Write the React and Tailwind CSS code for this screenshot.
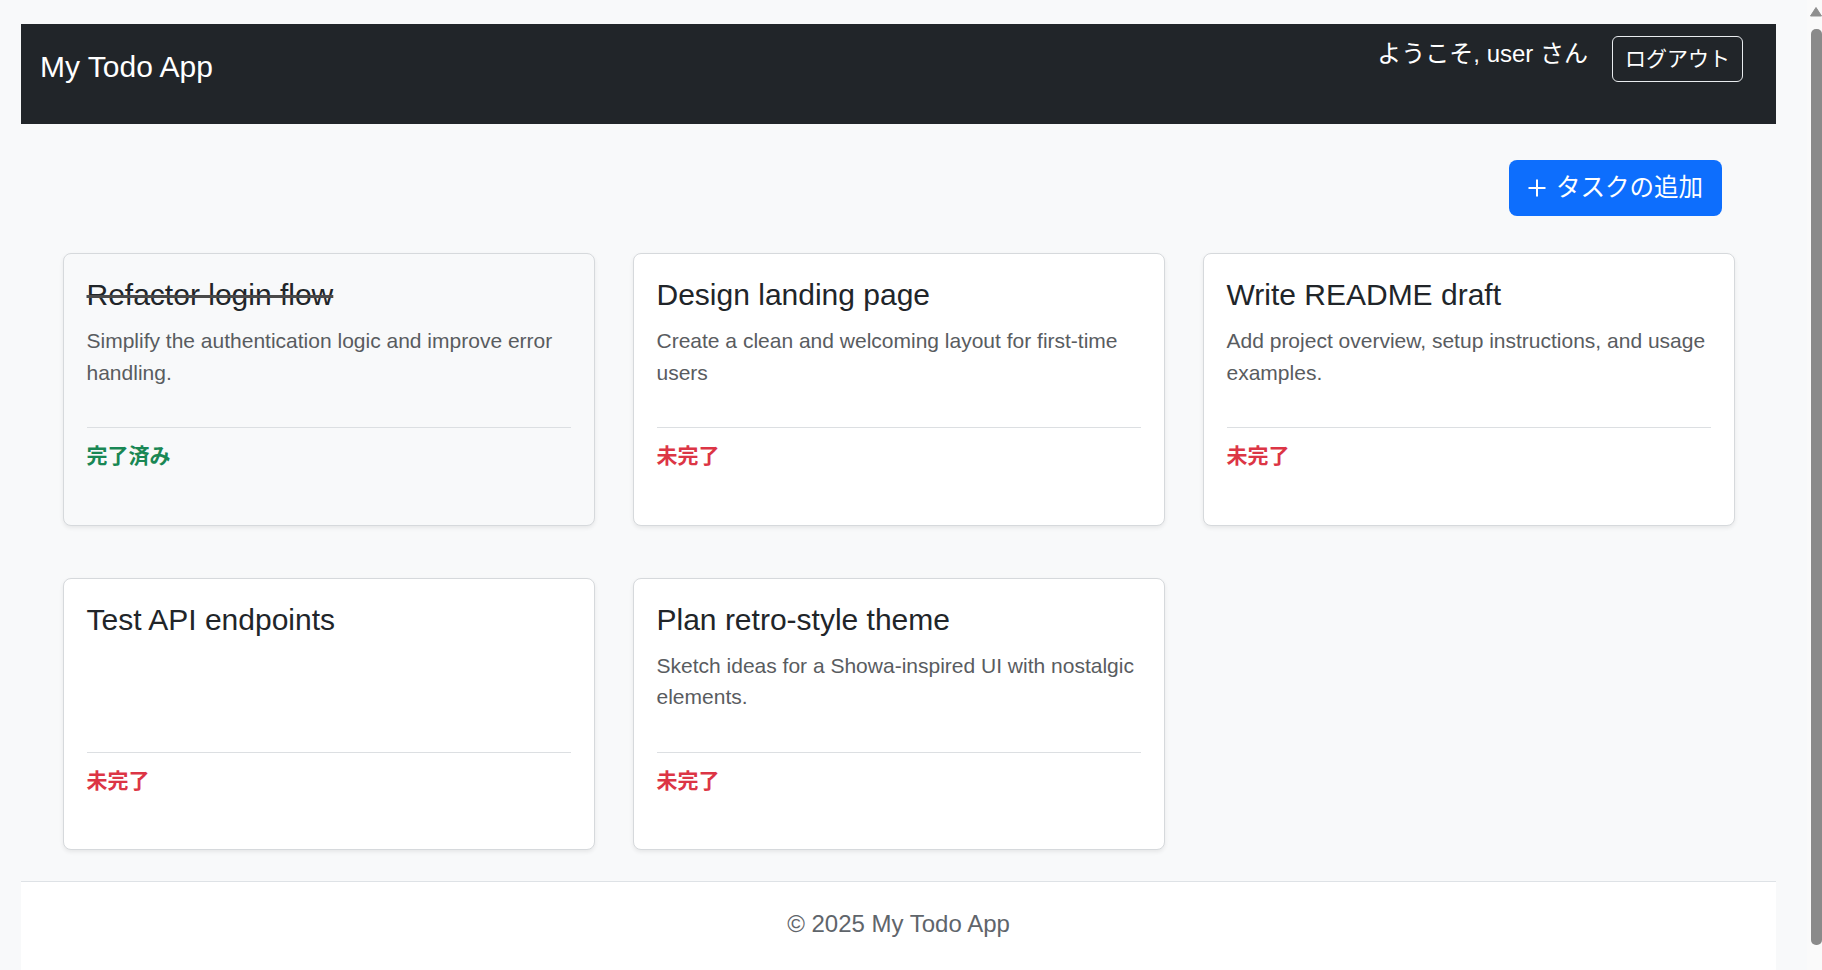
import React from "react";

const tasks = [
  {
    title: "Refactor login flow",
    desc: "Simplify the authentication logic and improve error handling.",
    done: true,
  },
  {
    title: "Design landing page",
    desc: "Create a clean and welcoming layout for first-time users",
    done: false,
  },
  {
    title: "Write README draft",
    desc: "Add project overview, setup instructions, and usage examples.",
    done: false,
  },
  { title: "Test API endpoints", desc: "", done: false },
  {
    title: "Plan retro-style theme",
    desc: "Sketch ideas for a Showa-inspired UI with nostalgic elements.",
    done: false,
  },
];

function TaskCard({ task }) {
  return (
    <div
      className={
        "rounded-[8px] border border-[#d6d9dc] shadow-[0_2px_4px_rgba(0,0,0,0.075)] px-[23px] pt-[23px] pb-[53px] " +
        (task.done ? "bg-[#f8f9fa]" : "bg-white")
      }
    >
      <h5
        className={
          "text-[30px] leading-[36px] text-[#212529] mb-[12px] " +
          (task.done ? "line-through decoration-[#4a4a4a]" : "")
        }
      >
        {task.title}
      </h5>
      <div className="h-[102px] text-[21px] leading-[31.5px] text-[#595c5f]">
        {task.desc}
      </div>
      <div className="border-t border-[#dcdfe2] pt-[12px]">
        <span
          className={
            "text-[21px] leading-[31.5px] font-bold " +
            (task.done ? "text-[#198754]" : "text-[#dc3545]")
          }
        >
          {task.done ? "完了済み" : "未完了"}
        </span>
      </div>
    </div>
  );
}

export default function App() {
  return (
    <div className="h-[970px] w-full overflow-hidden flex bg-[#f8f9fa] font-['Liberation_Sans','Noto_Sans_CJK_JP',sans-serif]">
      <div className="w-[1807px] shrink-0 flex flex-col pt-[24px] pl-[21px] pr-[31px]">
        <nav className="h-[100px] shrink-0 bg-[#212529] flex justify-between items-start pl-[19px] pr-[33px]">
          <div className="pt-[20px] text-[30px] leading-[45px] text-white">
            My Todo App
          </div>
          <div className="flex items-start gap-[24px] pt-[12px]">
            <span className="mt-[3px] text-[24px] leading-[30px] text-white">
              ようこそ, user さん
            </span>
            <button className="h-[46px] w-[131px] flex items-center justify-center border border-[#e9ecef] rounded-[6px] text-[21px] text-white">
              ログアウト
            </button>
          </div>
        </nav>

        <main className="px-[41.5px] shrink-0">
          <div className="flex justify-end pt-[36px] pr-[13px]">
            <button className="h-[56px] w-[213px] flex items-center justify-center gap-[9px] bg-[#0d6efd] rounded-[8px] text-white text-[24.5px]">
              <svg width="20" height="20" viewBox="0 0 20 20" className="shrink-0">
                <path d="M10 1.5V18.5M1.5 10H18.5" stroke="#ffffff" strokeWidth="2" strokeLinecap="butt" fill="none" />
              </svg>
              <span>タスクの追加</span>
            </button>
          </div>
          <div className="mt-[37px] grid grid-cols-3 gap-x-[38px] gap-y-[52px]">
            {tasks.map((t) => (
              <TaskCard key={t.title} task={t} />
            ))}
          </div>
        </main>

        <footer className="mt-[31px] flex-1 bg-white border-t border-[#dee2e6] pt-[25px] text-center">
          <span className="text-[24px] leading-[34.5px] text-[#5f656b]">
            © 2025 My Todo App
          </span>
        </footer>
      </div>

      <div className="w-[15px] shrink-0 bg-[#fafafa] flex flex-col">
        <svg width="15" height="24" viewBox="0 0 15 24" className="shrink-0">
          <polygon points="3.5,16 14.5,16 9,7.5" fill="#8f8f8f" strokeLinejoin="round" stroke="#8f8f8f" strokeWidth="1" />
        </svg>
        <div className="ml-[4px] mt-[5px] h-[916px] w-[11px] rounded-[5px] bg-[#8a8a8a]" />
      </div>
    </div>
  );
}
